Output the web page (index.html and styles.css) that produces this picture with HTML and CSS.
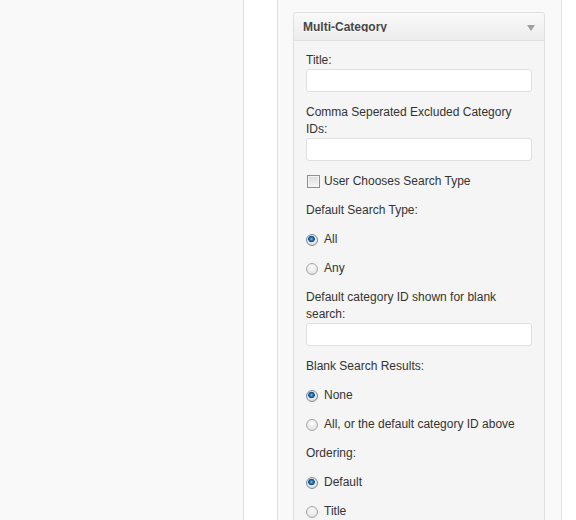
FILE: index.html
```html
<!DOCTYPE html>
<html>
<head>
<meta charset="utf-8">
<link rel="stylesheet" href="styles.css">
</head>
<body>
<div class="page">
  <div class="pane-left"></div>
  <div class="pane-gap"></div>
  <div class="sidebar">
    <div class="widget">
      <div class="widget-top">
        <h4 class="widget-title">Multi-Category</h4>
        <span class="widget-arrow"></span>
      </div>
      <div class="widget-inside">
        <p class="field">
          <label class="lbl">Title:</label>
          <input class="txt" type="text">
        </p>
        <p class="field">
          <label class="lbl">Comma Seperated Excluded Category IDs:</label>
          <input class="txt" type="text">
        </p>
        <p class="opt"><input class="chk" type="checkbox"><span>User Chooses Search Type</span></p>
        <p class="lbl-p">Default Search Type:</p>
        <p class="opt"><input class="rad" type="radio" name="t" checked><span>All</span></p>
        <p class="opt"><input class="rad" type="radio" name="t"><span>Any</span></p>
        <p class="field">
          <label class="lbl">Default category ID shown for blank search:</label>
          <input class="txt" type="text">
        </p>
        <p class="lbl-p">Blank Search Results:</p>
        <p class="opt"><input class="rad" type="radio" name="b" checked><span>None</span></p>
        <p class="opt"><input class="rad" type="radio" name="b"><span>All, or the default category ID above</span></p>
        <p class="lbl-p">Ordering:</p>
        <p class="opt"><input class="rad" type="radio" name="o" checked><span>Default</span></p>
        <p class="opt"><input class="rad" type="radio" name="o"><span>Title</span></p>
      </div>
    </div>
  </div>
  <div class="pane-right"></div>
</div>
</body>
</html>
```

FILE: styles.css
```css
html, body {
  margin: 0;
  padding: 0;
}
body {
  background: #fff;
  font-family: "Liberation Sans", Arial, sans-serif;
  font-size: 12px;
  color: #333;
  width: 576px;
  height: 520px;
  overflow: hidden;
}
.page {
  display: flex;
  height: 520px;
  overflow: hidden;
}
.pane-left {
  width: 243px;
  flex: none;
  background: #f9f9f9;
  border-right: 1px solid #e0e0e0;
}
.pane-gap {
  width: 33px;
  flex: none;
  background: #fff;
  border-right: 1px solid #e0e0e0;
}
.sidebar {
  width: 252px;
  flex: none;
  padding: 12px 16px 0 15px;
  background: #f9f9f9;
  border-right: 1px solid #e0e0e0;
}
.pane-right {
  flex: 1;
  background: #fff;
}
.widget {
  border: 1px solid #dfdfdf;
  border-radius: 3px;
  background: #f5f5f5;
}
.widget-top {
  position: relative;
  height: 27px;
  border-bottom: 1px solid #dfdfdf;
  border-radius: 3px 3px 0 0;
  background: linear-gradient(to bottom, #f9f9f9, #ececec);
}
.widget-title {
  margin: 0;
  padding: 8px 30px 0 9px;
  height: 11px;
  line-height: 12px;
  font-size: 12px;
  font-weight: bold;
  color: #464646;
  text-shadow: 0 1px 0 #fff;
  overflow: hidden;
  white-space: nowrap;
}
.widget-arrow {
  position: absolute;
  right: 9px;
  top: 12px;
  width: 0;
  height: 0;
  border-left: 4px solid transparent;
  border-right: 4px solid transparent;
  border-top: 6px solid #a0a0a0;
}
.widget-inside {
  padding: 0 12px;
}
.widget-inside p {
  margin: 12px 0;
  line-height: 17px;
}
.widget-inside p:first-child {
  margin-top: 11px;
}
.lbl {
  display: block;
}
.txt {
  display: block;
  box-sizing: border-box;
  width: 100%;
  height: 23px;
  margin: 0;
  padding: 3px 5px;
  border: 1px solid #dfdfdf;
  border-radius: 3px;
  background: #fff;
  font: 12px "Liberation Sans", Arial, sans-serif;
  outline: none;
}
.opt {
  display: flex;
  align-items: center;
  height: 17px;
}
.chk {
  appearance: none;
  -webkit-appearance: none;
  box-sizing: border-box;
  width: 13px;
  height: 13px;
  margin: 0 4px 0 1px;
  border: 1px solid #8e8f8f;
  background: linear-gradient(to bottom, #dcdcdc, #f6f6f6);
  box-shadow: inset 0 0 0 1px #f4f4f4;
}
.rad {
  appearance: none;
  -webkit-appearance: none;
  box-sizing: border-box;
  width: 12px;
  height: 12px;
  margin: 1px 6px 0 0;
  border-radius: 50%;
  border: 1px solid #a9a9a9;
  background: radial-gradient(circle at 50% 35%, #fdfdfd 0, #e8e8e8 60%, #d4d4d4 100%);
}
.rad:checked {
  border-color: #7b8a99;
  background:
    radial-gradient(circle at 45% 40%, #8fc6ee 0, #2a77b6 1.5px, #0e4a83 3px, rgba(14,74,131,0) 3.6px),
    radial-gradient(circle at 50% 35%, #fdfdfd 0, #e6e6e6 60%, #cfcfcf 100%);
}
```
